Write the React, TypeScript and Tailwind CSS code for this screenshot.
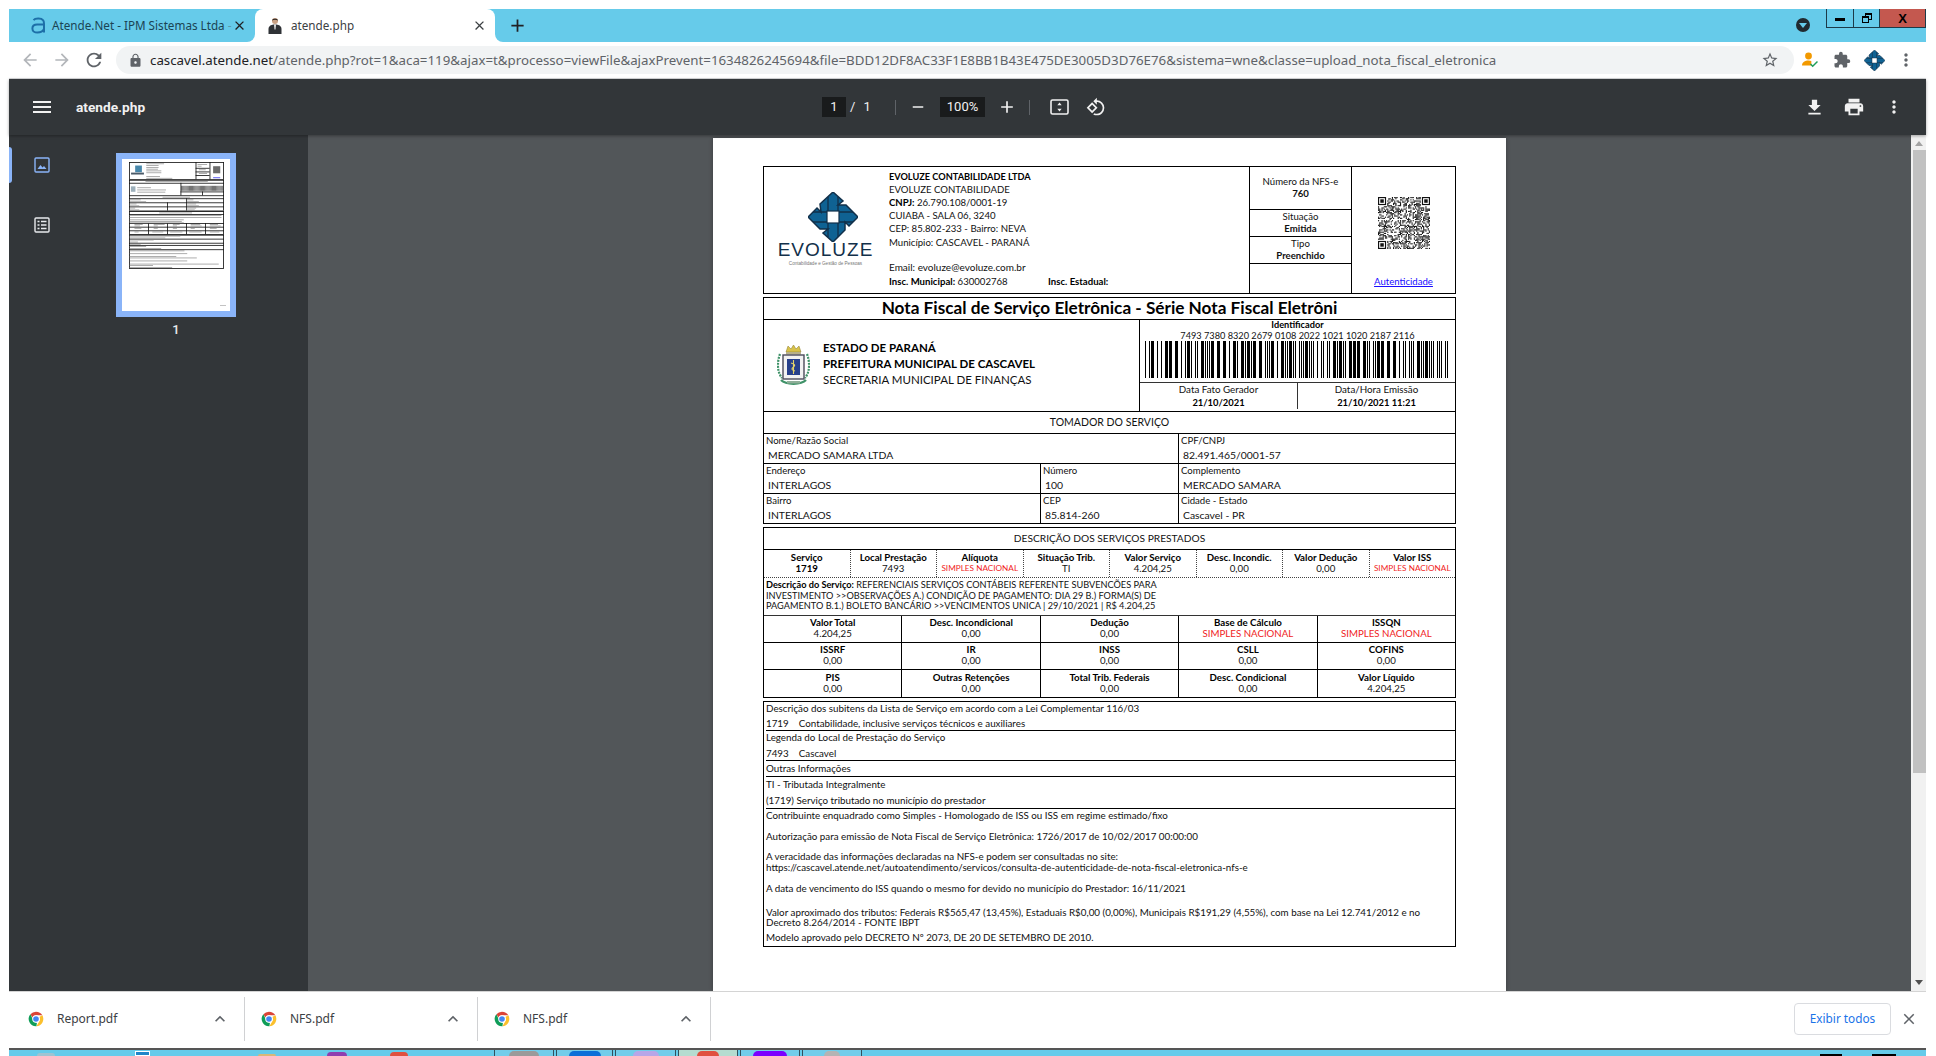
import {
  MdAdd,
  MdArrowBack,
  MdArrowForward,
  MdClose,
  MdExtension,
  MdFileDownload,
  MdKeyboardArrowUp,
  MdLock,
  MdMenu,
  MdMoreVert,
  MdOutlineRotate90DegreesCcw,
  MdPrint,
  MdRefresh,
  MdRemove,
  MdStarBorder,
} from "react-icons/md";

const ui = "font-['Noto_Sans',sans-serif]";
const doc = "font-[Lato,sans-serif]";

function random(seed: number) {
  let s = seed;
  return () => {
    s = (s * 16807) % 2147483647;
    return s / 2147483647;
  };
}

function EvoluzeMark({ size }: { size: number }) {
  return (
    <svg width={size} height={size} viewBox="0 0 50 50">
      <path
        d="M25 0 L35 9 L30 13 L38 13 L50 25 L41 34 L37 30 L37 38 L25 50 L15 41 L20 37 L12 37 L0 25 L9 16 L13 20 L12 12 Z"
        fill="#0f6293"
        stroke="#12304a"
        strokeWidth="1.5"
        strokeLinejoin="miter"
      />
      <path d="M20 5 V45 M30 5 V45 M5 20 H45 M5 30 H45" stroke="#12304a" strokeWidth="1.3" />
      <rect x="19" y="19" width="12" height="12" fill="#fff" stroke="#12304a" strokeWidth="1.2" />
    </svg>
  );
}

function ChromeIcon() {
  return (
    <svg width="16" height="16" viewBox="0 0 24 24">
      <path d="M12 1a11 11 0 0 1 9.5 5.5H12a5.5 5.5 0 0 0-5.2 3.6L3.6 5A11 11 0 0 1 12 1z" fill="#db4437" />
      <path d="M21.5 6.5A11 11 0 0 1 12.6 23l4.2-7.4A5.5 5.5 0 0 0 16.8 9z" fill="#fbc02d" />
      <path d="M12.6 23A11 11 0 0 1 3.6 5l4.3 8.9a5.5 5.5 0 0 0 5.5 3.6z" fill="#0f9d58" />
      <circle cx="12" cy="12" r="5.6" fill="#fff" />
      <circle cx="12" cy="12" r="4.2" fill="#4285f4" />
    </svg>
  );
}

function TabStrip() {
  return (
    <div className="flex h-[33px] shrink-0">
      <div className="flex w-[246px] items-center rounded-br-[8px] bg-[#66cbea] pl-[22px] pr-[8px]">
        <svg width="15" height="17" viewBox="0 0 15 17" className="shrink-0">
          <path
            d="M2.5 3.2C4 1.4 10 .6 12.2 3.4c.8 1 .8 2.2.8 3.6v8.6M12.8 7.4H6.2C3.4 7.4 1.4 9 1.4 11.4s2 4.2 5 4.2c2.8 0 5.4-1 6.4-3.4"
            fill="none"
            stroke="#1d6fa8"
            strokeWidth="2"
          />
        </svg>
        <span className={`${ui} ml-[6px] w-[178px] whitespace-nowrap text-[11.7px] text-[#1b4454]`}>
          Atende.Net - IPM Sistemas Ltda <span className="text-[#5b98aa]">-</span>
        </span>
        <MdClose className="ml-[2px] shrink-0 text-[15px] text-[#202124]" />
      </div>
      <div className="w-[240px] bg-[#66cbea]">
        <div className="flex h-full items-center rounded-t-[8px] bg-white pl-[13px] pr-[8px]">
          <svg width="14" height="17" viewBox="0 0 14 17" className="shrink-0">
            <circle cx="7" cy="4" r="3" fill="#c9a184" />
            <path d="M4 3.5C4 1 10 1 10 3.5 8 2.5 6 2.5 4 3.5z" fill="#2b2320" />
            <path d="M0.5 17v-5C.5 9 3 8 5.5 7.5h3C11 8 13.5 9 13.5 12v5z" fill="#2f3236" />
            <path d="M6 7.5h2l-.5 5h-1z" fill="#e8e8e8" />
          </svg>
          <span className={`${ui} ml-[9px] flex-1 whitespace-nowrap text-[11.7px] text-[#3c4043]`}>atende.php</span>
          <MdClose className="shrink-0 text-[15px] text-[#3c4043]" />
        </div>
      </div>
      <div className="flex flex-1 items-start rounded-bl-[8px] bg-[#66cbea]">
        <MdAdd className="ml-[12px] mt-[6px] text-[21px] text-[#202124]" />
        <div className="flex-1" />
        <div className="mr-[16px] mt-[9px] flex h-[14px] w-[14px] items-center justify-center rounded-full bg-[#202a30]">
          <div className="h-0 w-0 border-x-[4px] border-t-[5px] border-x-transparent border-t-[#66cbea]" />
        </div>
        <div className="flex h-[19px] w-[100px] border-x border-b border-[#1c3a48]">
          <div className="flex w-[27px] items-center justify-center border-r border-[#1c3a48]">
            <div className="mt-[3px] h-[3px] w-[10px] bg-black" />
          </div>
          <div className="flex w-[26px] items-center justify-center border-r border-[#1c3a48]">
            <div className="relative h-[10px] w-[10px]">
              <div className="absolute right-0 top-0 h-[7px] w-[7px] border border-t-2 border-black" />
              <div className="absolute bottom-0 left-0 h-[7px] w-[7px] border border-t-2 border-black bg-[#66cbea]" />
            </div>
          </div>
          <div className="flex flex-1 items-center justify-center bg-[#c4584f]">
            <span className="font-['Liberation_Sans',sans-serif] text-[13px] font-bold leading-none text-black">X</span>
          </div>
        </div>
      </div>
    </div>
  );
}

function AddressBar() {
  return (
    <div className="flex h-[37px] shrink-0 items-center border-b border-[#d9dadc] bg-white pl-[5px]">
      <div className="flex w-[32px] justify-center">
        <MdArrowBack className="text-[20px] text-[#b3b6ba]" />
      </div>
      <div className="flex w-[32px] justify-center">
        <MdArrowForward className="text-[20px] text-[#b3b6ba]" />
      </div>
      <div className="flex w-[32px] justify-center">
        <MdRefresh className="text-[22px] text-[#5f6368]" />
      </div>
      <div className="ml-[6px] flex h-[28px] w-[1678px] items-center rounded-full bg-[#f1f3f4] pl-[12px] pr-[15px]">
        <MdLock className="text-[15px] text-[#5f6368]" />
        <span className={`${ui} ml-[7px] mt-px flex-1 whitespace-nowrap text-[13.3px] text-[#5f6368]`}>
          <span className="text-[#202124]">cascavel.atende.net</span>
          /atende.php?rot=1&amp;aca=119&amp;ajax=t&amp;processo=viewFile&amp;ajaxPrevent=1634826245694&amp;file=BDD12DF8AC33F1E8BB1B43E475DE3005D3D76E76&amp;sistema=wne&amp;classe=upload_nota_fiscal_eletronica
        </span>
        <MdStarBorder className="text-[18px] text-[#5f6368]" />
      </div>
      <div className="flex w-[32px] justify-center">
        <svg width="16" height="16" viewBox="0 0 16 16">
          <circle cx="6.5" cy="4" r="3.4" fill="#f29900" />
          <path d="M0 13.5C0 10 3 8.5 6.5 8.5c1.2 0 2 .2 2.8.5v4.5z" fill="#f29900" />
          <path d="M8.5 12l2.2 2.2L15.5 9.5" fill="none" stroke="#1e9e5a" strokeWidth="1.5" />
        </svg>
      </div>
      <div className="flex w-[32px] justify-center">
        <MdExtension className="text-[18px] text-[#5f6368]" />
      </div>
      <div className="flex w-[32px] justify-center">
        <EvoluzeMark size={21} />
      </div>
      <div className="flex w-[32px] justify-center">
        <MdMoreVert className="text-[20px] text-[#5f6368]" />
      </div>
    </div>
  );
}

function ViewerToolbar() {
  return (
    <div className="relative z-10 flex h-[56px] shrink-0 items-center bg-[#323639] pl-[17px] pr-[12px] text-[#f1f1f1] shadow-[0_1px_3px_rgba(0,0,0,0.35)]">
      <div className="flex w-[32px] justify-center">
        <MdMenu className="text-[24px]" />
      </div>
      <div className="ml-[18px] w-[746px] font-['Roboto',sans-serif] text-[13.7px] font-bold">atende.php</div>
      <div className="flex h-[20px] w-[24px] items-center justify-center bg-[#191b1c] font-['Roboto',sans-serif] text-[13px]">1</div>
      <div className="flex w-[49px] gap-[8px] pl-[4px] font-['Roboto',sans-serif] text-[13px]">
        <span>/</span>
        <span>1</span>
      </div>
      <div className="h-[15px] w-px bg-[#5f6368]" />
      <div className="ml-[6px] flex w-[32px] justify-center">
        <MdRemove className="text-[18px]" />
      </div>
      <div className="ml-[6px] flex h-[20px] w-[45px] items-center justify-center bg-[#191b1c] font-['Roboto',sans-serif] text-[13px]">
        100%
      </div>
      <div className="ml-[6px] flex w-[32px] justify-center">
        <MdAdd className="text-[20px]" />
      </div>
      <div className="ml-[6px] h-[15px] w-px bg-[#5f6368]" />
      <div className="ml-[13px] flex w-[32px] justify-center">
        <svg width="19" height="16" viewBox="0 0 19 16">
          <rect x="1" y="1" width="17" height="14" rx="1.5" fill="none" stroke="currentColor" strokeWidth="1.6" />
          <path d="M9.5 3.5l2.2 2.8H7.3zM9.5 12.5L7.3 9.7h4.4z" fill="currentColor" />
        </svg>
      </div>
      <div className="ml-[5px] flex w-[32px] justify-center">
        <MdOutlineRotate90DegreesCcw className="text-[20px]" />
      </div>
      <div className="flex-1" />
      <div className="flex w-[40px] justify-center">
        <MdFileDownload className="text-[21px]" />
      </div>
      <div className="flex w-[40px] justify-center">
        <MdPrint className="text-[22px]" />
      </div>
      <div className="flex w-[40px] justify-center">
        <MdMoreVert className="text-[20px]" />
      </div>
    </div>
  );
}

// miniature of the page, in the same coordinates as the document boxes
const thumbRules = [0, 127, 131, 153, 245, 267, 297, 327, 357, 361, 383, 449, 476, 503, 531, 535, 564, 594, 610, 642, 780];
const thumbColumns = [
  [486, 0, 127],
  [588, 0, 127],
  [376, 153, 245],
  [534, 217, 245],
  [416, 267, 357],
  [278, 297, 357],
  [139, 449, 531],
  [278, 449, 531],
  [416, 449, 531],
  [555, 449, 531],
];
const thumbText = [
  [126, 11, 130], [126, 24, 90], [126, 37, 90], [126, 50, 85], [126, 63, 110], [126, 77, 110], [126, 103, 100], [126, 117, 190],
  [500, 16, 70], [500, 28, 30], [510, 55, 50], [510, 82, 60], [120, 142, 455], [60, 187, 100], [60, 203, 210], [60, 219, 205],
  [245, 256, 200], [5, 276, 80], [5, 290, 120], [420, 276, 50], [420, 290, 90], [5, 306, 50], [5, 320, 70], [420, 306, 70], [420, 320, 90],
  [5, 336, 40], [5, 350, 70], [420, 336, 70], [420, 350, 60], [220, 372, 240], [5, 392, 670], [5, 405, 670], [5, 423, 395], [5, 434, 380], [5, 445, 395],
  [40, 458, 60], [180, 458, 80], [320, 458, 50], [450, 458, 70], [590, 458, 60], [40, 468, 40], [180, 468, 30], [320, 468, 30], [450, 468, 80], [590, 468, 80],
  [40, 485, 50], [180, 485, 30], [320, 485, 30], [450, 485, 30], [590, 485, 50], [40, 512, 30], [170, 512, 80], [300, 512, 90], [440, 512, 90], [590, 512, 70],
  [5, 542, 370], [5, 556, 260], [5, 571, 175], [5, 586, 60], [5, 602, 80], [5, 618, 120], [5, 634, 230], [5, 651, 400], [5, 672, 420], [5, 692, 340], [5, 703, 490], [5, 725, 420], [5, 748, 650], [5, 758, 170], [5, 772, 310],
];

function Thumbnail() {
  return (
    <svg width="108" height="152" viewBox="0 0 108 152" className="block bg-white">
      <rect x="98" y="146" width="6" height="0.7" fill="#aaa" />
      <g transform="translate(7 3) scale(0.137 0.136)">
        {thumbRules.map((y) => (
          <rect key={y} x="0" y={y} width="693" height="6" fill="#111" />
        ))}
        <rect x="0" y="0" width="6" height="127" fill="#111" />
        <rect x="687" y="0" width="6" height="127" fill="#111" />
        <rect x="0" y="131" width="6" height="226" fill="#111" />
        <rect x="687" y="131" width="6" height="226" fill="#111" />
        <rect x="0" y="361" width="6" height="170" fill="#111" />
        <rect x="687" y="361" width="6" height="170" fill="#111" />
        <rect x="0" y="535" width="6" height="245" fill="#111" />
        <rect x="687" y="535" width="6" height="245" fill="#111" />
        {thumbColumns.map(([x, y1, y2]) => (
          <rect key={`${x}-${y1}`} x={x} y={y1} width="6" height={y2 - y1} fill="#111" />
        ))}
        <rect x="486" y="43" width="102" height="6" fill="#111" />
        <rect x="486" y="70" width="102" height="6" fill="#111" />
        <rect x="486" y="97" width="102" height="6" fill="#111" />
        <rect x="376" y="217" width="317" height="6" fill="#111" />
        {thumbText.map(([x, y, w]) => (
          <rect key={`${x}-${y}`} x={x} y={y} width={w} height="5" fill="#888" />
        ))}
        <rect x="45" y="26" width="49" height="49" fill="#1a6a96" opacity="0.8" />
        <rect x="15" y="78" width="94" height="14" fill="#4c5b68" />
        <rect x="14" y="179" width="33" height="40" fill="#9db0bb" />
        <rect x="614" y="31" width="52" height="52" fill="#6b6b6b" />
        <rect x="614" y="113" width="52" height="6" fill="#3a3af0" />
        {Array.from({ length: 38 }, (_, i) => (
          <rect key={i} x={382 + i * 8} y="175" width="5" height="37" fill="#333" />
        ))}
      </g>
    </svg>
  );
}

function Sidebar() {
  return (
    <div className="flex w-[299px] shrink-0 bg-[#323639]">
      <div className="relative w-[51px] shrink-0">
        <div className="absolute left-0 top-[12px] h-[36px] w-[3px] rounded-r-[3px] bg-[#8ab4f8]" />
        <svg width="16" height="16" viewBox="0 0 16 16" className="absolute left-[25px] top-[22px]">
          <rect x="1" y="1" width="14" height="14" rx="1" fill="none" stroke="#8ab4f8" strokeWidth="1.4" />
          <path d="M3.5 12l3-4 2 2.5 1.5-1.5 2.5 3z" fill="#8ab4f8" />
        </svg>
        <svg width="16" height="16" viewBox="0 0 16 16" className="absolute left-[25px] top-[82px]">
          <rect x="1" y="1" width="14" height="14" rx="1" fill="none" stroke="#e8eaed" strokeWidth="1.4" />
          <path d="M3.5 4.5h2M7 4.5h5.5M3.5 8h2M7 8h5.5M3.5 11.5h2M7 11.5h5.5" stroke="#e8eaed" strokeWidth="1.4" />
        </svg>
      </div>
      <div className="flex flex-1 flex-col items-center pr-[16px] pt-[18px]">
        <div className="border-[6px] border-[#8ab4f8]">
          <Thumbnail />
        </div>
        <div className="mt-[3px] font-['Roboto',sans-serif] text-[13px] font-medium text-[#e8eaed]">1</div>
      </div>
    </div>
  );
}

function QrCode() {
  const n = 45;
  const rnd = random(7331);
  const cells: { x: number; y: number }[] = [];
  const inFinder = (x: number, y: number) =>
    (x < 8 && y < 8) || (x >= n - 8 && y < 8) || (x < 8 && y >= n - 8);
  for (let y = 0; y < n; y++) {
    for (let x = 0; x < n; x++) {
      if (!inFinder(x, y) && rnd() > 0.5) cells.push({ x, y });
    }
  }
  const finders = [
    [0, 0],
    [n - 7, 0],
    [0, n - 7],
  ];
  return (
    <svg width="52" height="52" viewBox={`0 0 ${n} ${n}`}>
      {cells.map((c) => (
        <rect key={`${c.x}-${c.y}`} x={c.x} y={c.y} width="1" height="1" fill="#111" />
      ))}
      {finders.map(([x, y]) => (
        <g key={`${x}-${y}`}>
          <rect x={x} y={y} width="7" height="7" fill="#111" />
          <rect x={x + 1} y={y + 1} width="5" height="5" fill="#fff" />
          <rect x={x + 2} y={y + 2} width="3" height="3" fill="#111" />
        </g>
      ))}
    </svg>
  );
}

function Barcode() {
  const rnd = random(4242);
  const bars: { x: number; w: number }[] = [];
  let x = 0;
  while (x < 305) {
    const w = rnd() > 0.62 ? 3 : 1;
    bars.push({ x, w });
    x += w + (rnd() > 0.65 ? 3 : 1);
  }
  return (
    <svg width="305" height="37" viewBox="0 0 305 37" shapeRendering="crispEdges" className="block">
      {bars.map((b) => (
        <rect key={b.x} x={b.x} y="0" width={b.w} height="37" fill="#000" />
      ))}
    </svg>
  );
}

function CoatOfArms() {
  return (
    <svg width="33" height="41" viewBox="0 0 33 41">
      <path d="M9 7L11 1l3 3 2.5-4L19 4l3-3 2 6z" fill="#d8c24a" stroke="#8a7a2a" strokeWidth="0.5" />
      <rect x="9" y="7" width="15" height="2.5" fill="#b7b08a" />
      <path d="M3 9c-3 8-3 18 2 24M30 9c3 8 3 18-2 24" fill="none" stroke="#3f9268" strokeWidth="2.2" strokeDasharray="2 1" />
      <rect x="6" y="10" width="21" height="24" fill="#f2f2f2" stroke="#4a4a5a" strokeWidth="1.4" />
      <rect x="10" y="14" width="13" height="16" fill="#27408b" />
      <path d="M16.5 15v14M14 18c3 1 5 2 2.5 4s-2 3 1.5 4" fill="none" stroke="#e4d36a" strokeWidth="1.1" />
      <path d="M4 35c5 5 20 5 25 0" fill="none" stroke="#3f9268" strokeWidth="2.4" />
      <rect x="10" y="36" width="13" height="2.5" fill="#8fae98" />
    </svg>
  );
}

function LogoBlock() {
  return (
    <div className="flex w-[125px] shrink-0 flex-col items-center pl-[12px] pt-[25px]">
      <EvoluzeMark size={50} />
      <div className="ml-[-14px] mt-[-1px] font-['Liberation_Sans',sans-serif] text-[19px] font-normal leading-[18px] tracking-[1px] text-[#12304a]">
        EVOLUZE
      </div>
      <div className="ml-[-14px] mt-[1px] whitespace-nowrap font-['Liberation_Sans',sans-serif] text-[4.6px] leading-[7px] text-[#777]">
        Contabilidade e Gestão de Pessoas
      </div>
    </div>
  );
}

function CompanyInfo() {
  return (
    <div className={`${doc} flex-1 whitespace-nowrap pt-[3px] text-[9.6px] leading-[13px] text-[#111]`}>
      <div className="text-[9.2px] font-bold text-black">EVOLUZE CONTABILIDADE LTDA</div>
      <div>EVOLUZE CONTABILIDADE</div>
      <div>
        <b className="text-black">CNPJ:</b> 26.790.108/0001-19
      </div>
      <div>CUIABA - SALA 06, 3240</div>
      <div>CEP: 85.802-233 - Bairro: NEVA</div>
      <div className="mt-px">Município: CASCAVEL - PARANÁ</div>
      <div className="mt-[12px] text-[10px]">Email: evoluze@evoluze.com.br</div>
      <div className="mt-px flex">
        <div className="w-[159px]">
          <b className="text-black">Insc. Municipal:</b> 630002768
        </div>
        <b className="text-black">Insc. Estadual:</b>
      </div>
    </div>
  );
}

function StatusCell({ label, value, className }: { label: string; value: string; className: string }) {
  return (
    <div className={`flex flex-col items-center justify-center border-b border-black leading-[12px] ${className}`}>
      <div>{label}</div>
      <b>{value}</b>
    </div>
  );
}

function HeaderBox() {
  return (
    <div className="flex h-[128px] border border-black">
      <div className="flex w-[486px] border-r border-black">
        <LogoBlock />
        <CompanyInfo />
      </div>
      <div className={`${doc} flex w-[102px] flex-col border-r border-black text-[9.6px] text-[#111]`}>
        <StatusCell label="Número da NFS-e" value="760" className="h-[43px]" />
        <StatusCell label="Situação" value="Emitida" className="h-[27px]" />
        <StatusCell label="Tipo" value="Preenchido" className="h-[27px]" />
      </div>
      <div className="flex flex-1 flex-col items-center pt-[30px]">
        <QrCode />
        <span className={`${doc} mt-[27px] text-[9.6px] leading-[12px] text-[#1a0dff] underline`}>Autenticidade</span>
      </div>
    </div>
  );
}

function Field({ label, value, className }: { label: string; value: string; className?: string }) {
  return (
    <div className={`pl-[2px] ${className ?? ""}`}>
      <div className="pt-px text-[9.6px] leading-[11px]">{label}</div>
      <div className="mt-[3px] pl-[2px] text-[10.4px] leading-[12px]">{value}</div>
    </div>
  );
}

function CityBox() {
  return (
    <div className={`${doc} mt-[3px] h-[227px] border border-black text-[#111]`}>
      <div className="flex h-[22px] items-center justify-center whitespace-nowrap border-b border-black pb-px text-[17.2px] font-bold text-black">
        Nota Fiscal de Serviço Eletrônica - Série Nota Fiscal Eletrôni
      </div>
      <div className="flex h-[92px] border-b border-black">
        <div className="flex w-[376px] items-start border-r border-black pl-[13px] pt-[25px]">
          <CoatOfArms />
          <div className="ml-[13px] mt-[-5px] whitespace-nowrap text-[11.5px] leading-[16px]">
            <div className="font-bold text-black">ESTADO DE PARANÁ</div>
            <div className="font-bold text-black">PREFEITURA MUNICIPAL DE CASCAVEL</div>
            <div>SECRETARIA MUNICIPAL DE FINANÇAS</div>
          </div>
        </div>
        <div className="flex flex-1 flex-col">
          <div className="flex h-[64px] flex-col items-center border-b border-[#333] text-[9.2px] leading-[11px]">
            <b className="mt-[-1px] text-black">Identificador</b>
            <div>7493 7380 8320 2679 0108 2022 1021 1020 2187 2116</div>
            <Barcode />
          </div>
          <div className="flex flex-1 pb-[2px] leading-[13px]">
            <div className="flex w-[158px] flex-col items-center justify-center border-r border-[#333]">
              <div className="text-[9.8px]">Data Fato Gerador</div>
              <b className="text-[9.4px] text-black">21/10/2021</b>
            </div>
            <div className="flex flex-1 flex-col items-center justify-center">
              <div className="text-[9.8px]">Data/Hora Emissão</div>
              <b className="text-[9.4px] text-black">21/10/2021 11:21</b>
            </div>
          </div>
        </div>
      </div>
      <div className="flex h-[22px] items-center justify-center border-b border-black text-[10.5px]">TOMADOR DO SERVIÇO</div>
      <div className="flex h-[30px] border-b border-black">
        <Field label="Nome/Razão Social" value="MERCADO SAMARA LTDA" className="w-[415px] border-r border-black" />
        <Field label="CPF/CNPJ" value="82.491.465/0001-57" />
      </div>
      <div className="flex h-[30px] border-b border-black">
        <Field label="Endereço" value="INTERLAGOS" className="w-[277px] border-r border-black" />
        <Field label="Número" value="100" className="w-[138px] border-r border-black" />
        <Field label="Complemento" value="MERCADO SAMARA" />
      </div>
      <div className="flex h-[29px]">
        <Field label="Bairro" value="INTERLAGOS" className="w-[277px] border-r border-black" />
        <Field label="CEP" value="85.814-260" className="w-[138px] border-r border-black" />
        <Field label="Cidade - Estado" value="Cascavel - PR" />
      </div>
    </div>
  );
}

const serviceCols = [
  { label: "Serviço", value: "1719", bold: true },
  { label: "Local Prestação", value: "7493" },
  { label: "Alíquota", value: "SIMPLES NACIONAL", red: true },
  { label: "Situação Trib.", value: "TI" },
  { label: "Valor Serviço", value: "4.204,25" },
  { label: "Desc. Incondic.", value: "0,00" },
  { label: "Valor Dedução", value: "0,00" },
  { label: "Valor ISS", value: "SIMPLES NACIONAL", red: true },
];

const totals = [
  [
    { label: "Valor Total", value: "4.204,25" },
    { label: "Desc. Incondicional", value: "0,00" },
    { label: "Dedução", value: "0,00" },
    { label: "Base de Cálculo", value: "SIMPLES NACIONAL", red: true },
    { label: "ISSQN", value: "SIMPLES NACIONAL", red: true },
  ],
  [
    { label: "ISSRF", value: "0,00" },
    { label: "IR", value: "0,00" },
    { label: "INSS", value: "0,00" },
    { label: "CSLL", value: "0,00" },
    { label: "COFINS", value: "0,00" },
  ],
  [
    { label: "PIS", value: "0,00" },
    { label: "Outras Retenções", value: "0,00" },
    { label: "Total Trib. Federais", value: "0,00" },
    { label: "Desc. Condicional", value: "0,00" },
    { label: "Valor Líquido", value: "4.204,25" },
  ],
];

function ServicesBox() {
  return (
    <div className={`${doc} mt-[3px] h-[171px] border border-black text-[#111]`}>
      <div className="flex h-[22px] items-center justify-center border-b border-black text-[10.2px]">
        DESCRIÇÃO DOS SERVIÇOS PRESTADOS
      </div>
      <div className="flex h-[28px] border-b border-dotted border-[#444]">
        {serviceCols.map((c) => (
          <div
            key={c.label}
            className="flex flex-1 flex-col items-center justify-center whitespace-nowrap border-r border-dotted border-[#444] pb-[2px] leading-[11px] last:border-r-0"
          >
            <b className="text-[9.7px] text-black">{c.label}</b>
            {c.red ? (
              <span className="text-[8.2px] text-[#f01c1c]">{c.value}</span>
            ) : (
              <span className={`text-[9.7px] ${c.bold ? "font-bold text-black" : ""}`}>{c.value}</span>
            )}
          </div>
        ))}
      </div>
      <div className="h-[38px] border-b border-[#333] pl-[2px] pt-[2px] text-[9.2px] leading-[10.7px]">
        <b className="text-black">Descrição do Serviço:</b> REFERENCIAIS SERVIÇOS CONTÁBEIS REFERENTE SUBVENCÕES PARA
        <br />
        INVESTIMENTO &gt;&gt;OBSERVAÇÕES A.) CONDIÇÃO DE PAGAMENTO: DIA 29 B.) FORMA(S) DE
        <br />
        PAGAMENTO B.1.) BOLETO BANCÁRIO &gt;&gt;VENCIMENTOS UNICA | 29/10/2021 | R$ 4.204,25
      </div>
      {totals.map((row, i) => (
        <div key={i} className={`flex h-[27px] ${i < 2 ? "border-b border-black" : ""}`}>
          {row.map((c) => (
            <div
              key={c.label}
              className="flex flex-1 flex-col items-center justify-center border-r border-black pb-[2px] leading-[11px] last:border-r-0"
            >
              <b className="text-[9.7px] text-black">{c.label}</b>
              <span className={`text-[9.7px] ${c.red ? "text-[#f01c1c]" : ""}`}>{c.value}</span>
            </div>
          ))}
        </div>
      ))}
    </div>
  );
}

function NotesBox() {
  return (
    <div className={`${doc} mt-[3px] h-[246px] border border-black pl-[2px] text-[9.8px] text-[#111]`}>
      <div className="h-[29px] border-b border-black leading-[12px]">
        <div>Descrição dos subitens da Lista de Serviço em acordo com a Lei Complementar 116/03</div>
        <div className="mt-[3px]">1719 &nbsp;&nbsp;&nbsp;Contabilidade, inclusive serviços técnicos e auxiliares</div>
      </div>
      <div className="h-[30px] border-b border-black leading-[12px]">
        <div>Legenda do Local de Prestação do Serviço</div>
        <div className="mt-[4px]">7493 &nbsp;&nbsp;&nbsp;Cascavel</div>
      </div>
      <div className="flex h-[16px] items-center border-b border-black pb-px">Outras Informações</div>
      <div className="h-[32px] border-b border-black pt-px leading-[12px]">
        <div>TI - Tributada Integralmente</div>
        <div className="mt-[4px]">(1719) Serviço tributado no município do prestador</div>
      </div>
      <div className="pt-px leading-[11px]">
        <div>Contribuinte enquadrado como Simples - Homologado de ISS ou ISS em regime estimado/fixo</div>
        <div className="mt-[10px]">Autorização para emissão de Nota Fiscal de Serviço Eletrônica: 1726/2017 de 10/02/2017 00:00:00</div>
        <div className="mt-[9px] leading-[11px]">
          A veracidade das informações declaradas na NFS-e podem ser consultadas no site:
          <br />
          https://cascavel.atende.net/autoatendimento/servicos/consulta-de-autenticidade-de-nota-fiscal-eletronica-nfs-e
        </div>
        <div className="mt-[10px]">A data de vencimento do ISS quando o mesmo for devido no município do Prestador: 16/11/2021</div>
        <div className="mt-[13px] leading-[10px]">
          Valor aproximado dos tributos: Federais R$565,47 (13,45%), Estaduais R$0,00 (0,00%), Municipais R$191,29 (4,55%), com base na Lei 12.741/2012 e no
          <br />
          Decreto 8.264/2014 - FONTE IBPT
        </div>
        <div className="mt-[5px]">Modelo aprovado pelo DECRETO Nº 2073, DE 20 DE SETEMBRO DE 2010.</div>
      </div>
    </div>
  );
}

function PdfPage() {
  return (
    <div className="h-full w-[793px] bg-white px-[50px] pt-[28px] shadow-[0_0_4px_rgba(0,0,0,0.3)]">
      <HeaderBox />
      <CityBox />
      <ServicesBox />
      <NotesBox />
    </div>
  );
}

function Scrollbar() {
  return (
    <div className="flex w-[15px] shrink-0 flex-col items-center bg-[#f1f1f1]">
      <div className="mt-[6px] h-0 w-0 border-x-[4px] border-b-[5px] border-x-transparent border-b-[#a3a3a3]" />
      <div className="ml-px mt-[4px] h-[623px] w-[13px] bg-[#c1c1c1]" />
      <div className="flex-1" />
      <div className="mb-[6px] h-0 w-0 border-x-[4px] border-t-[5px] border-x-transparent border-t-[#505050]" />
    </div>
  );
}

function DownloadItem({ name }: { name: string }) {
  return (
    <div className="flex h-[44px] w-[233px] items-center border-r border-[#d0d1d3] pl-[16px]">
      <ChromeIcon />
      <span className={`${ui} ml-[13px] flex-1 text-[12px] text-[#3c4043]`}>{name}</span>
      <MdKeyboardArrowUp className="mr-[14px] text-[20px] text-[#5f6368]" />
    </div>
  );
}

function DownloadBar() {
  return (
    <div className="flex h-[57px] shrink-0 items-center border-t border-[#d4d4d4] bg-white pb-[2px] pl-[3px]">
      <DownloadItem name="Report.pdf" />
      <DownloadItem name="NFS.pdf" />
      <DownloadItem name="NFS.pdf" />
      <div className="flex-1" />
      <div className={`${ui} flex h-[32px] w-[97px] items-center justify-center rounded-[4px] border border-[#dadce0] text-[11.8px] text-[#1a73e8]`}>
        Exibir todos
      </div>
      <MdClose className="ml-[9px] mr-[8px] text-[18px] text-[#5f6368]" />
    </div>
  );
}

const taskItems = [
  { w: 60, color: "#9a9a9a", shape: "w-[30px]", active: false },
  { w: 57, color: "#0b6fd8", shape: "w-[32px] rounded-none", active: false },
  { w: 61, color: "#b7a6e8", shape: "w-[26px]", active: false },
  { w: 60, color: "#e0503f", shape: "w-[22px]", active: true },
  { w: 60, color: "#7a00ff", shape: "w-[34px] rounded-none", active: false },
  { w: 60, color: "#b4b4b4", shape: "w-[16px]", active: false },
];

function Taskbar() {
  return (
    <div className="flex h-[8px] shrink-0 items-stretch overflow-hidden border-t-2 border-[#555] bg-[#66cbea]">
      <div className="flex w-[485px] shrink-0 items-end">
        <div className="ml-[28px] h-[3px] w-[18px] rounded-t-full bg-[#9fc4d2]" />
        <div className="ml-[80px] h-[5px] w-[15px] border border-white bg-[#1f86c9]" />
        <div className="ml-[108px] h-[2px] w-[18px] rounded-t-full bg-[#d8b878]" />
        <div className="ml-[51px] h-[4px] w-[20px] rounded-t-full bg-[#8e3fb0]" />
        <div className="ml-[43px] h-[4px] w-[18px] rounded-t-full bg-[#e0503f]" />
      </div>
      <div className="flex gap-[2px]">
        {taskItems.map((t, i) => (
          <div
            key={i}
            style={{ width: t.w }}
            className={`flex items-end justify-center border-x border-[#33505c] ${t.active ? "bg-[#b5dcd0]" : "bg-[#72cdea]"}`}
          >
            <div className={`h-[5px] rounded-t-full ${t.shape}`} style={{ backgroundColor: t.color }} />
          </div>
        ))}
      </div>
      <div className="flex-1" />
      <div className="mr-[30px] flex items-end gap-[30px]">
        <div className="h-[2px] w-[22px] bg-black" />
        <div className="h-[2px] w-[24px] bg-black" />
      </div>
    </div>
  );
}

export default function App() {
  return (
    <div className="flex h-[1056px] w-[1936px] flex-col overflow-hidden bg-white pl-[9px] pr-[10px] pt-[9px]">
      <TabStrip />
      <AddressBar />
      <ViewerToolbar />
      <div className="flex min-h-0 flex-1">
        <Sidebar />
        <div className="flex min-w-0 flex-1 justify-center overflow-hidden bg-[#525659] pt-[3px]">
          <PdfPage />
        </div>
        <Scrollbar />
      </div>
      <DownloadBar />
      <Taskbar />
    </div>
  );
}
